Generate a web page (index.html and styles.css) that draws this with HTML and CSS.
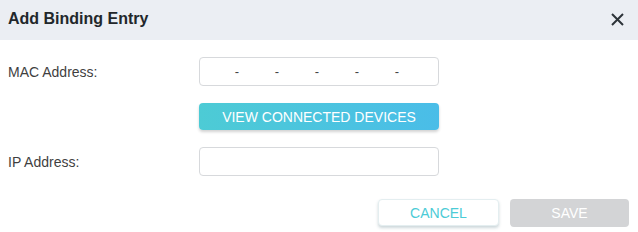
FILE: index.html
```html
<!DOCTYPE html>
<html>
<head>
<meta charset="utf-8">
<link rel="stylesheet" href="styles.css">
</head>
<body>
<div class="dialog">
  <div class="header">
    <span class="title">Add Binding Entry</span>
    <span class="close">
      <svg width="13" height="13" viewBox="0 0 13 13"><path d="M1 1 L12 12 M12 1 L1 12" stroke="#2d3439" stroke-width="2" fill="none"/></svg>
    </span>
  </div>
  <div class="body">
    <div class="row">
      <label class="label">MAC Address:</label>
      <div class="input mac">
        <span class="seg"></span><span class="dash">-</span>
        <span class="seg"></span><span class="dash">-</span>
        <span class="seg"></span><span class="dash">-</span>
        <span class="seg"></span><span class="dash">-</span>
        <span class="seg"></span><span class="dash">-</span>
        <span class="seg"></span>
      </div>
    </div>
    <div class="row">
      <span class="label"></span>
      <button class="btn primary">VIEW CONNECTED DEVICES</button>
    </div>
    <div class="row">
      <label class="label">IP Address:</label>
      <div class="input"></div>
    </div>
    <div class="footer">
      <button class="btn cancel">CANCEL</button>
      <button class="btn save">SAVE</button>
    </div>
  </div>
</div>
</body>
</html>
```
FILE: styles.css
```css
html, body {
  margin: 0;
  padding: 0;
  background: #ffffff;
  font-family: "Liberation Sans", Arial, sans-serif;
}
.dialog {
  width: 638px;
  height: 232px;
}
.header {
  height: 40px;
  background: #ebeef3;
  display: flex;
  align-items: center;
  justify-content: space-between;
  padding: 0 14px 0 8px;
}
.title {
  font-size: 16px;
  font-weight: bold;
  color: #22272b;
  margin-top: -2px;
}
.close {
  display: flex;
  margin-top: -2px;
}
.body {
  padding: 17px 0 0 8px;
}
.row {
  display: flex;
  align-items: center;
  margin-bottom: 17px;
}
.label {
  width: 191px;
  font-size: 14px;
  color: #3f3f3f;
}
.input {
  box-sizing: border-box;
  width: 240px;
  height: 29px;
  border: 1px solid #d7d9dc;
  border-radius: 4px;
  background: #fff;
}
.mac {
  display: flex;
  align-items: center;
}
.seg {
  width: 34px;
}
.dash {
  width: 6px;
  text-align: center;
  font-size: 13px;
  color: #444;
}
.btn {
  font-family: "Liberation Sans", Arial, sans-serif;
  font-size: 14px;
  border: none;
  border-radius: 4px;
  padding: 0;
  cursor: pointer;
}
.primary {
  width: 240px;
  height: 27px;
  color: #fff;
  background: linear-gradient(90deg, #4dcbd5, #4abde8);
  box-shadow: 0 2px 3px rgba(0, 0, 0, 0.18);
}
.footer {
  display: flex;
  justify-content: flex-end;
  align-items: flex-start;
  gap: 11px;
  padding-right: 9px;
  margin-top: 23px;
}
.cancel {
  width: 121px;
  height: 27px;
  background: #fff;
  color: #4ccbd6;
  border: 1px solid #e4eef0;
  box-shadow: 0 2px 3px rgba(60, 100, 110, 0.25);
}
.save {
  width: 119px;
  height: 28px;
  background: #d3d4d6;
  color: #fff;
}
```
